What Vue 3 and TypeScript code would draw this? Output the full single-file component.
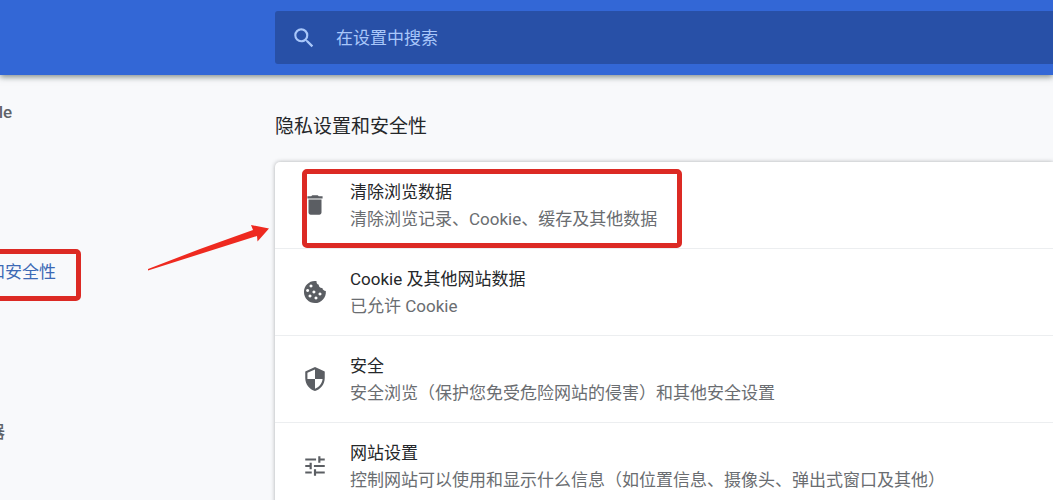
<script setup lang="ts">
interface NavItem {
  label: string
  kind: string
}
interface Row {
  title: string
  detail: string
  icon: string
  marked?: boolean
}

const nav: NavItem[] = [
  { label: '您与 Google', kind: 'strong' },
  { label: '隐私设置和安全性', kind: 'active' },
  { label: '默认浏览器', kind: 'strong' },
]

const rows: Row[] = [
  {
    title: '清除浏览数据',
    detail: '清除浏览记录、Cookie、缓存及其他数据',
    icon: 'M6 19c0 1.100.9 2 2 2h8c1.100 0 2-.9 2-2V7H6v12zM19 4h-3.500l-1-1h-5l-1 1H5v2h14V4z',
    marked: true,
  },
  {
    title: 'Cookie 及其他网站数据',
    detail: '已允许 Cookie',
    icon: 'M22 11c-1.800 0-3-.9-3.200-2.600-2 .2-3.500-1.100-3.300-3-1.600-.4-2.300-1.500-2-3.300C7.300 1 1.800 6 1.800 12c0 5.600 4.500 10.200 10.200 10.200S22.600 17 22 11z M8.300 5.100a1.400 1.400 0 1 0 .01 0z M5.200 9.200a1.400 1.400 0 1 0 .01 0z M11 10.600a1.400 1.400 0 1 0 .01 0z M16.600 12.400a1.400 1.400 0 1 0 .01 0z M7.400 14.300a1.400 1.400 0 1 0 .01 0z M12.900 16.100a1.400 1.400 0 1 0 .01 0z',
  },
  {
    title: '安全',
    detail: '安全浏览（保护您免受危险网站的侵害）和其他安全设置',
    icon: 'M12 1L3 5v6c0 5.550 3.840 10.740 9 12 5.160-1.260 9-6.450 9-12V5l-9-4zm0 10.990h7c-.53 4.120-3.280 7.790-7 8.940V12H5V6.300l7-3.110v8.800z',
  },
  {
    title: '网站设置',
    detail: '控制网站可以使用和显示什么信息（如位置信息、摄像头、弹出式窗口及其他）',
    icon: 'M3 17v2h6v-2H3zM3 5v2h10V5H3zm10 16v-2h8v-2h-8v-2h-2v6h2zM7 9v2H3v2h4v2h2V9H7zm14 4v-2H11v2h10zm-6-4h2V7h4V5h-4V3h-2v6z',
  },
]
</script>

<template>
  <div class="page">
    <header class="bar">
      <label class="search">
        <svg viewBox="0 0 24 24" aria-hidden="true">
          <path d="M15.500 14h-.79l-.28-.27A6.471 6.471 0 0 0 16 9.500 6.500 6.500 0 1 0 9.500 16c1.610 0 3.090-.59 4.230-1.570l.27.28v.79l5 4.990L20.490 19l-4.990-5zm-6 0C7.010 14 5 11.990 5 9.500S7.010 5 9.500 5 14 7.010 14 9.500 11.990 14 9.500 14z" />
        </svg>
        <input type="search" placeholder="在设置中搜索" aria-label="在设置中搜索" />
      </label>
    </header>
    <div class="body">
      <nav class="side">
        <a v-for="n in nav" :key="n.label" href="#" :class="n.kind">{{ n.label }}</a>
        <svg class="arrow" viewBox="0 0 124 48" aria-hidden="true">
          <path d="M1 45 L53 25 L106 6 L104 1 L122 4.500 L110.500 17.500 L110 12 L53 30 L1 46.500 Z" />
        </svg>
      </nav>
      <main class="main">
        <h2>隐私设置和安全性</h2>
        <div class="card">
          <button v-for="r in rows" :key="r.title" type="button" :class="{ marked: r.marked }">
            <svg viewBox="0 0 24 24" aria-hidden="true"><path fill-rule="evenodd" :d="r.icon" /></svg>
            <span class="text">
              <span class="title">{{ r.title }}</span>
              <span class="detail">{{ r.detail }}</span>
            </span>
          </button>
        </div>
      </main>
    </div>
  </div>
</template>

<style>
body {
  margin: 0;
  background: #f8f9fb;
  overflow: hidden;
}
</style>

<style scoped>
.page {
  height: 100vh;
  overflow: hidden;
  font-family: Roboto, "Noto Sans CJK SC", sans-serif;
  font-size: 17px;
  line-height: 27px;
  text-spacing-trim: space-all;
  color: #25272a;
}
.bar {
  position: relative;
  box-sizing: border-box;
  height: 75px;
  padding: 11px 0 11px 275px;
  background: #3367d6;
  box-shadow: 0 2px 6px rgba(50, 65, 60, 0.6);
}
.search {
  display: flex;
  align-items: center;
  gap: 19px;
  height: 53px;
  padding-left: 16px;
  background: #2850a7;
  border-radius: 3px 0 0 3px;
}
.search svg {
  width: 26px;
  height: 26px;
  fill: #a9c7fa;
}
.search input {
  flex: 1;
  min-width: 0;
  padding: 2px 0 0;
  border: 0;
  outline: 0;
  background: none;
  font: inherit;
  color: #a9c7fa;
}
.search input::placeholder {
  color: #a9c7fa;
  opacity: 1;
}
.body {
  display: flex;
}
.side {
  position: relative;
  flex: 0 0 275px;
  display: flex;
  flex-direction: column;
  align-items: flex-start;
  gap: 107px;
  padding-top: 10px;
}
.side a {
  position: relative;
  box-sizing: border-box;
  height: 53px;
  margin-left: -80px;
  padding: 14px 25px 12px 0;
  color: #5f6368;
  text-decoration: none;
  white-space: nowrap;
}
.side .strong {
  font-weight: 500;
}
.side .active {
  color: #3c69b5;
}
.side .active::after {
  content: "";
  position: absolute;
  inset: 4px 0 -3px 0;
  border: 5px solid #dc2a24;
  border-radius: 5px;
}
.arrow {
  position: absolute;
  top: 149px;
  left: 147px;
  width: 124px;
  height: 48px;
  fill: #ee2a20;
}
.main {
  flex: 1;
  min-width: 0;
}
h2 {
  margin: 37px 0 20px;
  font-size: 19px;
  font-weight: 400;
  line-height: 30px;
}
.card {
  background: #fff;
  border-radius: 5px 0 0 5px;
  box-shadow: 0 0 4px rgba(60, 64, 67, 0.4);
}
.card button {
  position: relative;
  display: flex;
  align-items: center;
  gap: 22px;
  width: 100%;
  height: 87px;
  padding: 0 0 0 27px;
  border: 0;
  border-bottom: 1px solid #eceef0;
  background: none;
  font: inherit;
  color: inherit;
  text-align: left;
}
.card svg {
  flex: none;
  width: 26px;
  height: 26px;
  fill: #5b5e63;
}
.text {
  padding-top: 2px;
  white-space: nowrap;
}
.title,
.detail {
  display: block;
}
.detail {
  color: #6a6d71;
}
.marked::after {
  content: "";
  position: absolute;
  top: 7px;
  left: 27px;
  box-sizing: border-box;
  width: 380px;
  height: 79px;
  border: 5px solid #dc2a24;
  border-radius: 5px;
}
</style>
